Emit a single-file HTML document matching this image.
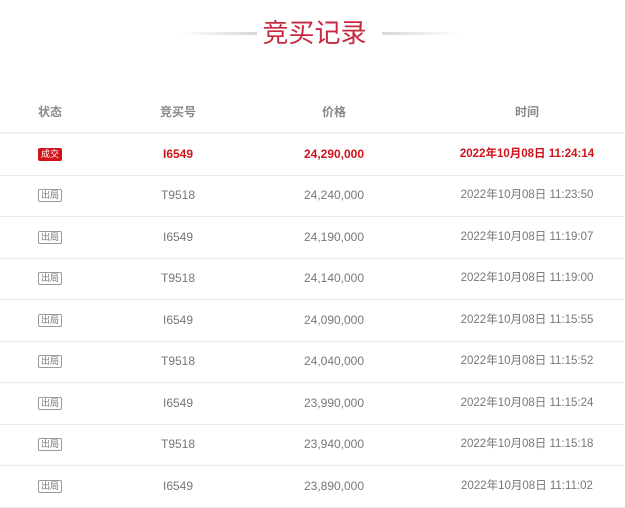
<!DOCTYPE html>
<html><head><meta charset="utf-8"><style>
body{margin:0;width:625px;height:506px;background:#fff;font-family:"Liberation Sans","Noto Sans CJK SC",sans-serif;overflow:hidden;position:relative}
.t{position:absolute;left:2px;width:625px;top:15px;text-align:center;font-size:26px;color:#c8283f;line-height:36px}
.l{position:absolute;top:32px;height:3px;width:78px}
.l1{left:179px;background:linear-gradient(to right,rgba(220,220,220,0),#d8d8d8)}
.l2{left:382px;background:linear-gradient(to left,rgba(220,220,220,0),#d8d8d8)}
.row{position:absolute;left:0;width:625px;height:41px;border-bottom:1px solid #ececec;font-size:12px;color:#777}
.row div{position:absolute;top:0;line-height:41px;text-align:center}
.c1{left:20px;width:60px}.c2{left:138px;width:80px}.c3{left:274px;width:120px}.c4{left:427px;width:200px;font-size:11.5px}
.h{top:92px;height:40px;font-weight:bold;color:#888;border-bottom:2px solid #f0f0f0}
.h div{line-height:40px;font-size:12px}
.red{color:#d0121b;font-weight:bold}
.b{display:inline-block;font-size:9px;line-height:11px;padding:0 2px;border:1px solid #999;border-radius:2px;color:#777;vertical-align:middle}
.br{background:#d0121b;border-color:#d0121b;color:#fff;font-weight:normal}
</style></head><body>
<div class="l l1"></div><div class="l l2"></div>
<div class="t">竞买记录</div>
<div class="row h"><div class="c1">状态</div><div class="c2">竞买号</div><div class="c3">价格</div><div class="c4">时间</div></div>
<div class="row red" style="top:134px"><div class="c1"><span class="b br">成交</span></div><div class="c2">I6549</div><div class="c3">24,290,000</div><div class="c4">2022年10月08日 11:24:14</div></div>
<div class="row" style="top:175px"><div class="c1"><span class="b">出局</span></div><div class="c2">T9518</div><div class="c3">24,240,000</div><div class="c4">2022年10月08日 11:23:50</div></div>
<div class="row" style="top:217px"><div class="c1"><span class="b">出局</span></div><div class="c2">I6549</div><div class="c3">24,190,000</div><div class="c4">2022年10月08日 11:19:07</div></div>
<div class="row" style="top:258px"><div class="c1"><span class="b">出局</span></div><div class="c2">T9518</div><div class="c3">24,140,000</div><div class="c4">2022年10月08日 11:19:00</div></div>
<div class="row" style="top:300px"><div class="c1"><span class="b">出局</span></div><div class="c2">I6549</div><div class="c3">24,090,000</div><div class="c4">2022年10月08日 11:15:55</div></div>
<div class="row" style="top:341px"><div class="c1"><span class="b">出局</span></div><div class="c2">T9518</div><div class="c3">24,040,000</div><div class="c4">2022年10月08日 11:15:52</div></div>
<div class="row" style="top:383px"><div class="c1"><span class="b">出局</span></div><div class="c2">I6549</div><div class="c3">23,990,000</div><div class="c4">2022年10月08日 11:15:24</div></div>
<div class="row" style="top:424px"><div class="c1"><span class="b">出局</span></div><div class="c2">T9518</div><div class="c3">23,940,000</div><div class="c4">2022年10月08日 11:15:18</div></div>
<div class="row" style="top:466px"><div class="c1"><span class="b">出局</span></div><div class="c2">I6549</div><div class="c3">23,890,000</div><div class="c4">2022年10月08日 11:11:02</div></div>
</body></html>
